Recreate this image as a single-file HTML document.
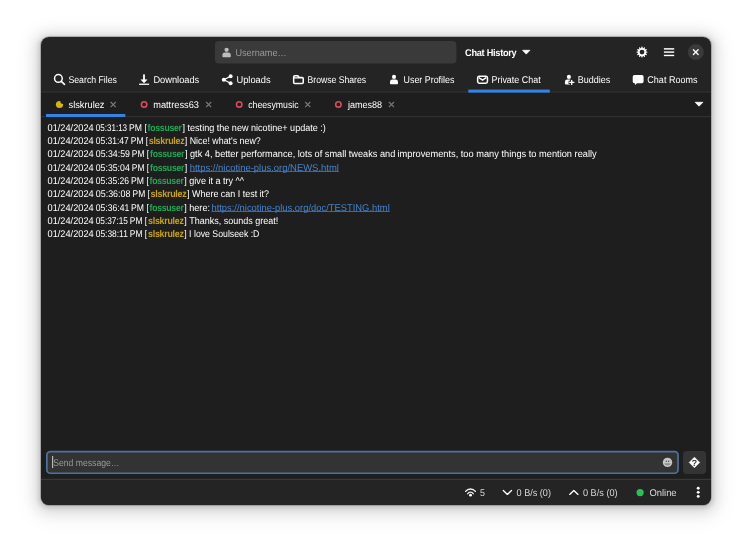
<!DOCTYPE html>
<html><head><meta charset="utf-8"><title>Nicotine+</title>
<style>
*{box-sizing:border-box;margin:0;padding:0}
html,body{width:752px;height:550px;background:#fff;overflow:hidden}
body{font-family:"Liberation Sans",sans-serif;font-size:9.8px;text-rendering:geometricPrecision;color:#fff;position:relative}
#win{will-change:transform;position:absolute;left:41px;top:37px;width:670px;height:468px;background:#242424;border-radius:8px;overflow:hidden}
#shadow{position:absolute;left:41px;top:37px;width:670px;height:468px;border-radius:8px;
 box-shadow:0 0 0 .7px rgba(0,0,0,.25),0 1.3px 5px 1.3px rgba(0,0,0,.14),0 2px 13px 6px rgba(0,0,0,.10),0 4px 21px 10px rgba(0,0,0,.05)}
.abs{position:absolute;white-space:nowrap}
.t,.m{transform-origin:0 50%}
.t{position:absolute;white-space:pre;line-height:12px;height:12px}
.st{color:#dadada}
.ph{color:#9a9a9a}
.b{font-weight:bold}
.m{position:absolute;white-space:pre;line-height:13.33px;height:13.33px}
.g{color:#1fa855;font-weight:bold}
.y{color:#c8a40c;font-weight:bold}
.a{color:#4582cc;text-decoration:underline;text-decoration-thickness:1px;text-underline-offset:0px;text-decoration-color:rgba(69,130,204,.75);text-decoration-skip-ink:none}
svg{position:absolute;overflow:visible}
</style></head><body>
<div id="shadow"></div>
<div id="win">
<svg id="icons" style="left:0;top:0" width="670" height="468" viewBox="41 37 670 468">
<!-- backgrounds and rules -->
<rect class="k" x="41" y="92" width="670" height="388" fill="#1e1e1e"/>
<rect class="k" x="41" y="91.3" width="670" height="1.4" fill="#2f2f2f"/>
<rect class="k" x="41" y="115.9" width="670" height="1.3" fill="#303030"/>
<rect class="k" x="41" y="478.8" width="670" height="1.3" fill="#383838"/>
<rect class="k" x="41" y="480.1" width="670" height="25" fill="#242424"/>
<rect class="k" x="468.3" y="89.6" width="81.5" height="3" fill="#3584e4"/>
<rect class="k" x="46" y="114" width="79.3" height="3" fill="#3584e4"/>
<rect class="k" x="215" y="40.9" width="241.4" height="22.6" rx="4" fill="#3a3a3a"/>
<rect class="k" x="46.85" y="451.65" width="631.2" height="21.6" rx="3.4" fill="#333" stroke="#4d729f" stroke-width="1.7"/>
<rect class="k" x="683" y="451" width="23.1" height="23.1" rx="4" fill="#343434"/>
<rect id="caret" x="52.2" y="456" width=".95" height="12" fill="#dcdcdc"/>
<!-- header: user icon, arrow, gear, menu, close -->
<circle cx="226.6" cy="49.85" r="2.15" fill="#bdbdbd"/><path d="M222.40 56.40 V55.00 Q222.40 52.60 224.80 52.60 H228.40 Q230.80 52.60 230.80 55.00 V56.40 Q230.80 57.20 230.00 57.20 H223.20 Q222.40 57.20 222.40 56.40 Z" fill="#bdbdbd"/>
<path d="M522.6 50.3 H529.9 L526.25 54.1 Z" fill="#fff" stroke="#fff" stroke-width=".8" stroke-linejoin="round"/>
<path fill-rule="evenodd" fill="#fff" d="M641.03 48.48 L641.60 46.61 L642.40 46.61 L642.97 48.48 L644.39 47.15 L645.09 47.55 L644.65 49.45 L646.55 49.01 L646.95 49.71 L645.62 51.13 L647.49 51.70 L647.49 52.50 L645.62 53.07 L646.95 54.49 L646.55 55.19 L644.65 54.75 L645.09 56.65 L644.39 57.05 L642.97 55.72 L642.40 57.59 L641.60 57.59 L641.03 55.72 L639.61 57.05 L638.91 56.65 L639.35 54.75 L637.45 55.19 L637.05 54.49 L638.38 53.07 L636.51 52.50 L636.51 51.70 L638.38 51.13 L637.05 49.71 L637.45 49.01 L639.35 49.45 L638.91 47.55 L639.61 47.15 Z M639.60 52.10 a2.4 2.4 0 1 0 4.8 0 a2.4 2.4 0 1 0 -4.8 0 Z"/>
<rect x="663.9" y="48.1" width="10.3" height="1.55" fill="#f4f4f4"/><rect x="663.9" y="51.35" width="10.3" height="1.5" fill="#f4f4f4"/><rect x="663.9" y="54.75" width="10.3" height="1.4" fill="#fff"/>
<circle cx="695.8" cy="52.1" r="8" fill="#3a3a3a"/>
<line x1="693.4" y1="49.75" x2="698.15" y2="54.5" stroke="#fff" stroke-width="1.3" stroke-linecap="round"/><line x1="698.15" y1="49.75" x2="693.4" y2="54.5" stroke="#fff" stroke-width="1.3" stroke-linecap="round"/>
<!-- search -->
<circle cx="58.4" cy="78.45" r="3.85" fill="none" stroke="#fff" stroke-width="1.5"/><path d="M61.3 81.3 L64.5 84.3" stroke="#fff" stroke-width="1.6" stroke-linecap="round"/>
<!-- download -->
<rect x="143.1" y="74.4" width="1.8" height="6" fill="#fff"/><path d="M141 79.7 H147 L144 82.9 Z" fill="#fff" stroke="#fff" stroke-width=".5" stroke-linejoin="round"/><rect x="139.1" y="83.6" width="10" height="1.3" fill="#fff"/>
<!-- share -->
<path d="M230.65 76.2 L223.8 79.75 L230.65 83.3" fill="none" stroke="#fff" stroke-width="1.15"/><circle cx="223.8" cy="79.75" r="2" fill="#fff"/><circle cx="230.65" cy="76.2" r="1.95" fill="#fff"/><circle cx="230.65" cy="83.3" r="1.95" fill="#fff"/>
<!-- folder -->
<path fill-rule="evenodd" fill="#fff" d="M292.9 77 Q292.9 75.1 294.8 75.1 H297.4 Q298.3 75.1 298.9 75.8 L299.6 76.7 H302.2 Q304 76.7 304 78.5 V82.4 Q304 84.2 302.2 84.2 H294.7 Q292.9 84.2 292.9 82.4 Z M294.4 78.6 V82.3 Q294.4 82.8 294.9 82.8 H302 Q302.5 82.8 302.5 82.3 V78.6 Z M294.4 77.2 V76.9 Q294.4 76.4 294.9 76.4 H297.3 L297.9 77.2 Z"/>
<!-- user profiles -->
<circle cx="394.0" cy="76.90" r="2.05" fill="#fff"/><path d="M390.00 83.40 V82.00 Q390.00 79.60 392.40 79.60 H395.60 Q398.00 79.60 398.00 82.00 V83.40 Q398.00 84.20 397.20 84.20 H390.80 Q390.00 84.20 390.00 83.40 Z" fill="#fff"/>
<!-- mail -->
<rect x="477.65" y="76.35" width="9.8" height="6.9" rx="1.7" fill="none" stroke="#fff" stroke-width="1.5"/><path d="M478.9 77.6 L482.55 80.1 L486.2 77.6" fill="none" stroke="#fff" stroke-width="1.3"/>
<!-- buddies -->
<circle cx="568.9" cy="76.9" r="2.05" fill="#fff"/><path d="M564.9 83.6 V82 Q564.9 79.6 567.3 79.6 H570.5 Q572.9 79.6 572.9 82 V83.6 Q572.9 84.4 572.1 84.4 H565.7 Q564.9 84.4 564.9 83.6 Z" fill="#fff"/><path d="M571.7 79.3 V85.5 M568.6 82.4 H575" stroke="#242424" stroke-width="3.3" fill="none"/><path d="M571.7 79.9 V84.9 M569.2 82.4 H574.4" stroke="#fff" stroke-width="1.3" fill="none"/>
<!-- chat rooms -->
<path d="M634.5 74.9 H641.8 Q643.6 74.9 643.6 76.7 V81.5 Q643.6 83.3 641.8 83.3 H636.9 L635.2 85 L634.8 83.3 H634.5 Q632.7 83.3 632.7 81.5 V76.7 Q632.7 74.9 634.5 74.9 Z" fill="#fff"/>
<!-- sub tabs -->
<circle cx="59.5" cy="104.5" r="3.6" fill="#d4b411"/><circle cx="62.7" cy="101.6" r="2.35" fill="#1e1e1e"/>
<circle cx="144.1" cy="104.4" r="2.7" fill="none" stroke="#dd4a5c" stroke-width="1.6"/><circle cx="239.2" cy="104.4" r="2.7" fill="none" stroke="#dd4a5c" stroke-width="1.6"/><circle cx="338.4" cy="104.4" r="2.7" fill="none" stroke="#dd4a5c" stroke-width="1.6"/>
<path d="M110.65 102.00 L115.75 107.10 M115.75 102.00 L110.65 107.10" stroke="#7a7a7a" stroke-width="1.15" fill="none"/><path d="M206.10 102.00 L211.20 107.10 M211.20 102.00 L206.10 107.10" stroke="#7a7a7a" stroke-width="1.15" fill="none"/><path d="M305.20 102.00 L310.30 107.10 M310.30 102.00 L305.20 107.10" stroke="#7a7a7a" stroke-width="1.15" fill="none"/><path d="M388.90 102.00 L394.00 107.10 M394.00 102.00 L388.90 107.10" stroke="#7a7a7a" stroke-width="1.15" fill="none"/>
<path d="M695.2 102.3 H702.9 L699.05 106.2 Z" fill="#fff" stroke="#fff" stroke-width=".8" stroke-linejoin="round"/>
<!-- emoji -->
<circle cx="667.5" cy="462.4" r="4.7" fill="#c6c6c6"/><ellipse cx="666.3" cy="461.3" rx=".65" ry=".8" fill="#444"/><ellipse cx="668.7" cy="461.3" rx=".65" ry=".8" fill="#444"/><path d="M664.3 463.2 H670.7 Q670 465.6 667.5 465.6 Q665 465.6 664.3 463.2 Z" fill="#8f8f8f"/>
<!-- diamond -->
<path d="M694.45 457.2 L699.7 462.45 L694.45 467.7 L689.2 462.45 Z" fill="#fff" stroke="#fff" stroke-width=".6" stroke-linejoin="round"/>
<text x="694.45" y="465.6" text-anchor="middle" font-family="Liberation Sans, sans-serif" font-weight="bold" font-size="8.8" fill="#2e2e2e">?</text>
<!-- wifi -->
<circle cx="470.5" cy="495.2" r="1.4" fill="#fff"/>
<path d="M465.6 491.4 A6.2 6.2 0 0 1 475.4 491.4" fill="none" stroke="#f0f0f0" stroke-width="1.35" stroke-linecap="round"/>
<path d="M467.7 493.7 A3.3 3.3 0 0 1 473.3 493.7" fill="none" stroke="#f0f0f0" stroke-width="1.35" stroke-linecap="round"/>
<!-- chevrons -->
<path d="M503.3 490.5 L507.4 494.4 L511.5 490.5" fill="none" stroke="#fff" stroke-width="1.35" stroke-linecap="round" stroke-linejoin="round"/>
<path d="M569.7 494.4 L573.85 490.5 L578 494.4" fill="none" stroke="#fff" stroke-width="1.35" stroke-linecap="round" stroke-linejoin="round"/>
<!-- online dot, menu dots -->
<circle cx="640.1" cy="492.6" r="3.6" fill="#26c256"/>
<circle cx="698.2" cy="488.3" r="1.45" fill="#fff"/><circle cx="698.2" cy="492.35" r="1.45" fill="#fff"/><circle cx="698.2" cy="496.4" r="1.45" fill="#fff"/>
</svg>
<!--TEXT-->
<span id="username" class="t ph" style="left:194px;top:11px;transform:translateX(0.44px) scaleX(0.9304)">Username…</span>
<span id="chathist" class="t b" style="left:424px;top:11px;letter-spacing:-0.30px;transform:translateX(0.10px) scaleX(0.9381)">Chat History</span>
<span id="t1" class="t" style="left:27px;top:38px;transform:translateX(0.45px) scaleX(0.8907)">Search Files</span>
<span id="t2" class="t" style="left:112px;top:38px;transform:translateX(0.39px) scaleX(0.9454)">Downloads</span>
<span id="t3" class="t" style="left:195px;top:38px;transform:translateX(0.46px) scaleX(0.9498)">Uploads</span>
<span id="t4" class="t" style="left:266px;top:38px;transform:translateX(0.50px) scaleX(0.8816)">Browse Shares</span>
<span id="t5" class="t" style="left:362px;top:38px;transform:translateX(0.52px) scaleX(0.9076)">User Profiles</span>
<span id="t6" class="t" style="left:450px;top:38px;transform:translateX(0.46px) scaleX(0.9123)">Private Chat</span>
<span id="t7" class="t" style="left:536px;top:38px;transform:translateX(0.80px) scaleX(0.9201)">Buddies</span>
<span id="t8" class="t" style="left:606px;top:38px;transform:translateX(0.37px) scaleX(0.9185)">Chat Rooms</span>
<span id="s1" class="t" style="left:27px;top:63px;transform:translateX(0.50px) scaleX(0.9448)">slskrulez</span>
<span id="s2" class="t" style="left:112px;top:63px;transform:translateX(0.19px) scaleX(0.9438)">mattress63</span>
<span id="s3" class="t" style="left:207px;top:63px;transform:translateX(0.22px) scaleX(0.8890)">cheesymusic</span>
<span id="s4" class="t" style="left:306px;top:63px;transform:translateX(0.91px) scaleX(0.9206)">james88</span>
<span id="send" class="t ph" style="left:12px;top:421px;transform:translateX(0.25px) scaleX(0.8801)">Send message…</span>
<span id="st1" class="t st" style="left:439px;top:451px;transform:translateX(0.05px) scaleX(0.9000)">5</span>
<span id="st2" class="t st" style="left:475px;top:451px;transform:translateX(0.52px) scaleX(0.9309)">0 B/s (0)</span>
<span id="st3" class="t st" style="left:541px;top:451px;transform:translateX(0.99px) scaleX(0.9341)">0 B/s (0)</span>
<span id="st4" class="t st" style="left:608px;top:451px;transform:translateX(0.42px) scaleX(0.9595)">Online</span>
<span id="m1" class="m" style="left:6px;top:85px;transform:translateX(0.53px) scaleX(0.9409)">01/24/2024</span>
<span id="m2" class="m" style="left:54px;top:85px;transform:translateX(0.75px) scaleX(0.8222)">05:31:13</span>
<span id="m3" class="m" style="left:88px;top:85px;transform:translateX(0.02px) scaleX(0.8828)">PM [</span>
<span id="m4" class="m g" style="left:106px;top:85px;letter-spacing:-0.30px;transform:translateX(0.60px) scaleX(0.8879)">fossuser</span>
<span id="m5" class="m" style="left:141px;top:85px;transform:translateX(0.48px) scaleX(0.9255)">] testing the new nicotine+ update :)</span>
<span id="m6" class="m" style="left:6px;top:98px;transform:translateX(0.53px) scaleX(0.9409)">01/24/2024</span>
<span id="m7" class="m" style="left:54px;top:98px;transform:translateX(0.75px) scaleX(0.8657)">05:31:47</span>
<span id="m8" class="m" style="left:89px;top:98px;transform:translateX(0.71px) scaleX(0.8704)">PM [</span>
<span id="m9" class="m y" style="left:107px;top:98px;letter-spacing:-0.30px;transform:translateX(0.76px) scaleX(0.9064)">slskrulez</span>
<span id="m10" class="m" style="left:143px;top:98px;transform:translateX(0.75px) scaleX(0.9044)">] Nice! what's new?</span>
<span id="m11" class="m" style="left:6px;top:111px;transform:translateX(0.53px) scaleX(0.9409)">01/24/2024</span>
<span id="m12" class="m" style="left:54px;top:111px;transform:translateX(0.77px) scaleX(0.8946)">05:34:59</span>
<span id="m13" class="m" style="left:90px;top:111px;transform:translateX(0.80px) scaleX(0.8624)">PM [</span>
<span id="m14" class="m g" style="left:109px;top:111px;letter-spacing:-0.30px;transform:translateX(0.04px) scaleX(0.8882)">fossuser</span>
<span id="m15" class="m" style="left:143px;top:111px;transform:translateX(0.89px) scaleX(0.9378)">] gtk 4, better performance, lots of small tweaks and</span>
<span id="m16" class="m" style="left:356px;top:111px;transform:translateX(0.47px) scaleX(0.9454)">improvements, too many things to mention really</span>
<span id="m17" class="m" style="left:6px;top:125px;transform:translateX(0.53px) scaleX(0.9409)">01/24/2024</span>
<span id="m18" class="m" style="left:54px;top:125px;transform:translateX(0.77px) scaleX(0.8910)">05:35:04</span>
<span id="m19" class="m" style="left:90px;top:125px;transform:translateX(0.80px) scaleX(0.8624)">PM [</span>
<span id="m20" class="m g" style="left:109px;top:125px;letter-spacing:-0.30px;transform:translateX(0.04px) scaleX(0.8882)">fossuser</span>
<span id="m21" class="m" style="left:143px;top:125px;transform:translateX(0.86px) scaleX(0.9000)">]</span>
<span id="m22" class="m a" style="left:148px;top:125px;transform:translateX(0.74px) scaleX(0.9646)">https://nicotine-plus.org/NEWS.html</span>
<span id="m23" class="m" style="left:6px;top:138px;transform:translateX(0.53px) scaleX(0.9409)">01/24/2024</span>
<span id="m24" class="m" style="left:54px;top:138px;transform:translateX(0.77px) scaleX(0.8728)">05:35:26</span>
<span id="m25" class="m" style="left:90px;top:138px;transform:translateX(0.02px) scaleX(0.8828)">PM [</span>
<span id="m26" class="m g" style="left:108px;top:138px;letter-spacing:-0.30px;transform:translateX(0.62px) scaleX(0.8825)">fossuser</span>
<span id="m27" class="m" style="left:143px;top:138px;transform:translateX(0.29px) scaleX(0.9239)">] give it a try ^^</span>
<span id="m28" class="m" style="left:6px;top:151px;transform:translateX(0.53px) scaleX(0.9409)">01/24/2024</span>
<span id="m29" class="m" style="left:54px;top:151px;transform:translateX(0.77px) scaleX(0.9098)">05:36:08</span>
<span id="m30" class="m" style="left:91px;top:151px;transform:translateX(0.50px) scaleX(0.8641)">PM [</span>
<span id="m31" class="m y" style="left:109px;top:151px;letter-spacing:-0.30px;transform:translateX(0.50px) scaleX(0.9184)">slskrulez</span>
<span id="m32" class="m" style="left:146px;top:151px;transform:translateX(0.08px) scaleX(0.9124)">] Where can I test it?</span>
<span id="m33" class="m" style="left:6px;top:165px;transform:translateX(0.53px) scaleX(0.9409)">01/24/2024</span>
<span id="m34" class="m" style="left:54px;top:165px;transform:translateX(0.75px) scaleX(0.8792)">05:36:41</span>
<span id="m35" class="m" style="left:90px;top:165px;transform:translateX(0.02px) scaleX(0.8828)">PM [</span>
<span id="m36" class="m g" style="left:108px;top:165px;letter-spacing:-0.30px;transform:translateX(0.62px) scaleX(0.8825)">fossuser</span>
<span id="m37" class="m" style="left:143px;top:165px;transform:translateX(0.28px) scaleX(0.9231)">] here:</span>
<span id="m38" class="m a" style="left:170px;top:165px;transform:translateX(0.43px) scaleX(0.9575)">https://nicotine-plus.org/doc/TESTING.html</span>
<span id="m39" class="m" style="left:6px;top:178px;transform:translateX(0.53px) scaleX(0.9409)">01/24/2024</span>
<span id="m40" class="m" style="left:54px;top:178px;transform:translateX(0.75px) scaleX(0.8433)">05:37:15</span>
<span id="m41" class="m" style="left:88px;top:178px;transform:translateX(0.80px) scaleX(0.8624)">PM [</span>
<span id="m42" class="m y" style="left:107px;top:178px;letter-spacing:-0.30px;transform:translateX(0.05px) scaleX(0.9070)">slskrulez</span>
<span id="m43" class="m" style="left:143px;top:178px;transform:translateX(0.30px) scaleX(0.9190)">] Thanks, sounds great!</span>
<span id="m44" class="m" style="left:6px;top:191px;transform:translateX(0.53px) scaleX(0.9409)">01/24/2024</span>
<span id="m45" class="m" style="left:54px;top:191px;transform:translateX(0.75px) scaleX(0.8574)">05:38:11</span>
<span id="m46" class="m" style="left:88px;top:191px;transform:translateX(0.80px) scaleX(0.8624)">PM [</span>
<span id="m47" class="m y" style="left:107px;top:191px;letter-spacing:-0.30px;transform:translateX(0.05px) scaleX(0.9070)">slskrulez</span>
<span id="m48" class="m" style="left:143px;top:191px;transform:translateX(0.26px) scaleX(0.8901)">] I love Soulseek :D</span>
<!--/TEXT-->
</div>
</body></html>
